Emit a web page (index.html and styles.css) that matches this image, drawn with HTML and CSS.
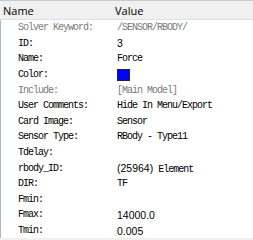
FILE: index.html
```html
<!DOCTYPE html>
<html>
<head>
<meta charset="utf-8">
<link rel="stylesheet" href="styles.css">
</head>
<body>
<div class="panel">
  <div class="header">
    <div class="h-name">Name</div>
    <div class="h-value">Value</div>
  </div>
  <div class="rows">
    <div class="row"><div class="lbl dim">Solver Keyword:</div><div class="val dim">/SENSOR/RBODY/</div></div>
    <div class="row"><div class="lbl">ID:</div><div class="val num">3</div></div>
    <div class="row"><div class="lbl">Name:</div><div class="val">Force</div></div>
    <div class="row"><div class="lbl">Color:</div><div class="val"><span class="swatch"></span></div></div>
    <div class="row"><div class="lbl dim">Include:</div><div class="val dim">[Main Model]</div></div>
    <div class="row"><div class="lbl">User Comments:</div><div class="val">Hide In Menu/Export</div></div>
    <div class="row"><div class="lbl">Card Image:</div><div class="val">Sensor</div></div>
    <div class="row"><div class="lbl">Sensor Type:</div><div class="val">RBody - Type11</div></div>
    <div class="row"><div class="lbl">Tdelay:</div><div class="val"></div></div>
    <div class="row"><div class="lbl">rbody_ID:</div><div class="val"><span class="num">(25964)</span> Element</div></div>
    <div class="row"><div class="lbl">DIR:</div><div class="val">TF</div></div>
    <div class="row"><div class="lbl">Fmin:</div><div class="val"></div></div>
    <div class="row"><div class="lbl">Fmax:</div><div class="val num">14000.0</div></div>
    <div class="row"><div class="lbl">Tmin:</div><div class="val num">0.005</div></div>
  </div>
  <div class="hscroll"></div>
</div>
</body>
</html>
```
FILE: styles.css
```css
html, body {
  margin: 0;
  padding: 0;
  background: #ffffff;
}
.panel {
  width: 253px;
  height: 240px;
  display: flex;
  flex-direction: column;
  overflow: hidden;
  position: relative;
}
.header {
  height: 18px;
  flex: none;
  display: grid;
  grid-template-columns: 115px 1fr;
  background: #f0f0f0;
  border-top: 1px solid #c3cad2;
  border-bottom: 1px solid #dde1e6;
  font-family: "Open Sans", "Noto Sans", sans-serif;
  font-size: 11px;
  color: #000;
  align-items: end;
}
.h-name { padding-left: 3px; line-height: 16px; }
.h-value { line-height: 16px; }
.rows {
  flex: 1;
  border-left: 1px solid #aeb6bf;
  display: flex;
  flex-direction: column;
  padding-top: 0;
}
.row {
  height: 15.6px;
  flex: none;
  display: grid;
  grid-template-columns: 116px 1fr;
  align-items: center;
  font-family: "Liberation Mono", monospace;
  font-size: 10px;
  letter-spacing: -1px;
  color: #000;
  white-space: nowrap;
}
.lbl { padding-left: 17px; }
.val { padding-left: 0; }
.dim { color: #7a7a7a; }
.num {
  font-family: "Liberation Sans", Arial, sans-serif;
  font-size: 10.5px;
  letter-spacing: 0;
}
.swatch {
  display: inline-block;
  width: 11px;
  height: 10px;
  background: #0000ff;
  border: 1px solid #202040;
  vertical-align: middle;
}
.hscroll {
  height: 2px;
  flex: none;
  background: #f0f0f0;
}
```
